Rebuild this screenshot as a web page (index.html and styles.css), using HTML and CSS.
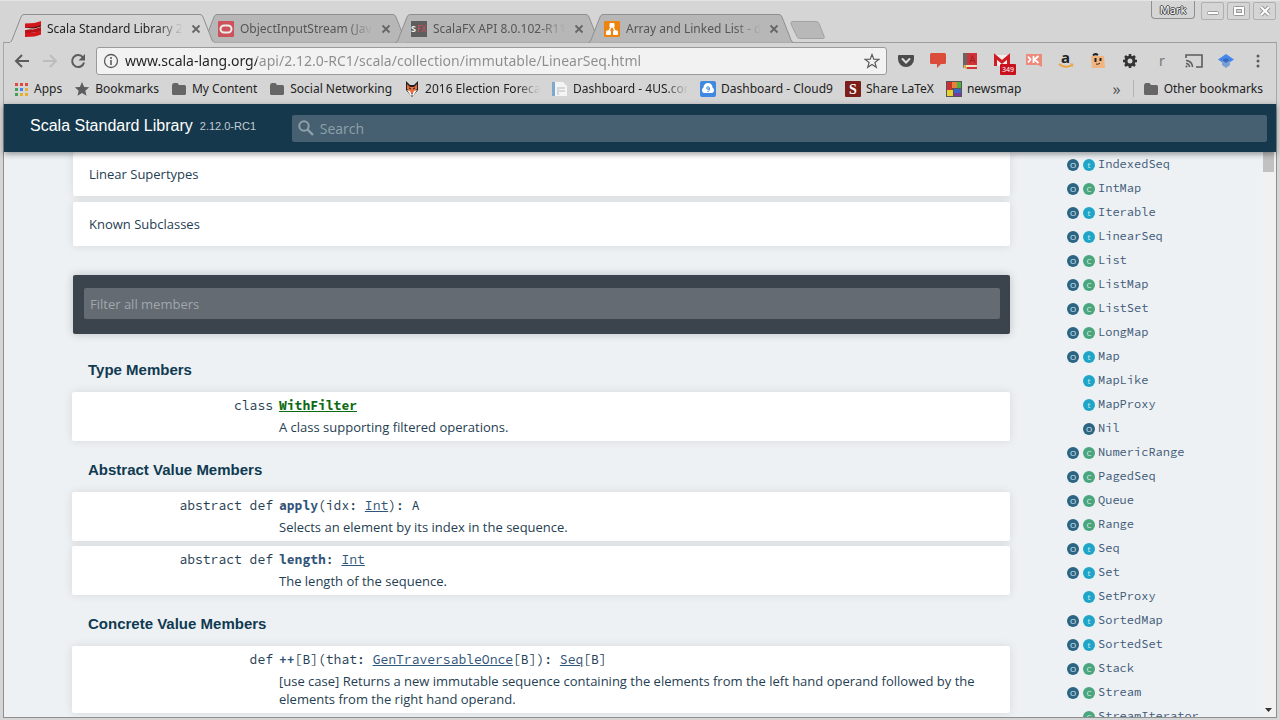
FILE: index.html
```html
<!DOCTYPE html>
<html lang="en">
<head>
    <meta charset="UTF-8">
    <meta name="viewport" content="width=device-width, initial-scale=1.0">
    <title>Scala Standard Library 2.12.0-RC1</title>
    <link rel="stylesheet" href="styles.css">
</head>
<body>

<svg class="defs" aria-hidden="true">
    <symbol id="tab-shape" viewBox="0 0 206 29" preserveAspectRatio="none">
        <path d="M0.500 28.500 Q2 28.500 3 26 L12 3 Q13 0.500 15 0.500 H191 Q193 0.500 194 3 L203 26 Q204 28.500 205.500 28.500"/>
    </symbol>
    <symbol id="close" viewBox="0 0 10 10">
        <path d="M1.500 1.500l7 7M8.500 1.500l-7 7" fill="none" stroke="#666" stroke-width="1.800"/>
    </symbol>
    <symbol id="folder" viewBox="0 0 16 16">
        <path d="M1 4.500Q1 2 3 2h3.500L8 4h5.500Q15 4 15 5.500v7Q15 14 13.500 14h-11Q1 14 1 12.500z" fill="#666"/>
    </symbol>
</svg>

<div class="window">
    <div class="titlebar">
        <div class="tabs">
            <div class="tab active">
                <svg class="shape"><use href="#tab-shape"/></svg>
                <svg class="icon" viewBox="0 0 16 16"><path d="M0 2.500Q11 2.500 16 0v4.500Q11 7 0 7z" fill="#d4151c"/><path d="M0 6.500Q11 6.500 16 4v2L9 8z" fill="#5a1212"/><path d="M0 8Q11 8 16 5.500V9Q11 12 0 12z" fill="#e8e0e0"/><path d="M0 9Q6 8 8 8.500L16 6v4Q11 12 0 12z" fill="#b81318"/><path d="M0 12Q11 12 16 9.500v4Q11 16 0 16z" fill="#d4151c"/></svg>
                <span class="tab-title">Scala Standard Library 2</span>
                <button class="tab-close" aria-label="Close tab"><svg><use href="#close"/></svg></button>
            </div>
            <div class="tab">
                <svg class="shape"><use href="#tab-shape"/></svg>
                <svg class="icon" viewBox="0 0 16 16"><rect width="16" height="16" rx="1" fill="#cb5359"/><rect x="2.500" y="4.500" width="11" height="7" rx="3.500" fill="none" stroke="#eee" stroke-width="2"/></svg>
                <span class="tab-title">ObjectInputStream (Jav</span>
                <button class="tab-close" aria-label="Close tab"><svg><use href="#close"/></svg></button>
            </div>
            <div class="tab">
                <svg class="shape"><use href="#tab-shape"/></svg>
                <svg class="icon" viewBox="0 0 16 16"><rect width="16" height="16" fill="#5e5e5e"/><text x="0" y="11" font-size="9" font-weight="bold" fill="#eee">S</text><text x="6" y="11" font-size="8" fill="#d84a5a">FX</text></svg>
                <span class="tab-title">ScalaFX API 8.0.102-R11</span>
                <button class="tab-close" aria-label="Close tab"><svg><use href="#close"/></svg></button>
            </div>
            <div class="tab">
                <svg class="shape"><use href="#tab-shape"/></svg>
                <svg class="icon" viewBox="0 0 16 16"><rect width="16" height="16" rx="1" fill="#ee8410"/><path d="M8 4L4 12M8 4l4 8" stroke="#fff" stroke-width="1.500"/><rect x="5.500" y="2" width="5" height="4.500" rx="1" fill="#fff"/><rect x="2" y="9.500" width="5" height="4.500" rx="1" fill="#fff"/><rect x="9" y="9.500" width="5" height="4.500" rx="1" fill="#fff"/></svg>
                <span class="tab-title">Array and Linked List - d</span>
                <button class="tab-close" aria-label="Close tab"><svg><use href="#close"/></svg></button>
            </div>
        </div>
        <button class="new-tab" aria-label="New tab">
            <svg viewBox="0 0 36 18"><path d="M2.500 0.500H26Q28 0.500 29 2.500l5 12.500Q35 17.500 33 17.500H10Q8 17.500 7 15.500L1 3Q0.500 0.500 2.500 0.500z" fill="#b8b8b8" stroke="#a2a2a2"/></svg>
        </button>
        <div class="window-controls">
            <button class="profile">Mark</button>
            <button class="control" aria-label="Minimize"><svg viewBox="0 0 12 12"><rect x="0.500" y="6.500" width="11" height="3" rx="1" fill="#fff" stroke="#999"/></svg></button>
            <button class="control" aria-label="Maximize"><svg viewBox="0 0 12 12"><rect x="0.500" y="1.500" width="11" height="9" rx="1" fill="#fff" stroke="#999"/><rect x="3.500" y="4.500" width="5" height="3" fill="#d5d5d5" stroke="#999"/></svg></button>
            <button class="control" aria-label="Close"><svg viewBox="0 0 12 12"><path d="M2 2l8 8M10 2l-8 8" stroke="#999" stroke-width="4"/><path d="M2 2l8 8M10 2l-8 8" stroke="#fff" stroke-width="2"/></svg></button>
        </div>
    </div>

    <div class="toolbar">
        <button class="nav" aria-label="Back"><svg viewBox="0 0 16 16"><path d="M15 8H2M8 2L2 8l6 6" fill="none" stroke="#5c5c5c" stroke-width="2"/></svg></button>
        <button class="nav" aria-label="Forward"><svg viewBox="0 0 16 16"><path d="M1 8h13M8 2l6 6-6 6" fill="none" stroke="#bdbdbd" stroke-width="2"/></svg></button>
        <button class="nav" aria-label="Reload"><svg viewBox="0 0 16 16"><path d="M13 4.500A6 6 0 1 0 14 9.500" fill="none" stroke="#5c5c5c" stroke-width="2"/><path d="M15 1v6.500H8.500z" fill="#5c5c5c"/></svg></button>
        <div class="omnibox">
            <svg class="icon" viewBox="0 0 16 16"><circle cx="8" cy="8" r="6.500" fill="none" stroke="#5c5c5c" stroke-width="1.300"/><path d="M8 7v5M8 4v2" stroke="#5c5c5c" stroke-width="1.600"/></svg>
            <input class="url" type="text" aria-label="Address" value="www.scala-lang.org/api/2.12.0-RC1/scala/collection/immutable/LinearSeq.html">
            <svg class="icon" viewBox="0 0 16 16"><path d="M8 1.500l1.800 4.700 5 .2-3.900 3.100 1.400 4.800L8 11.500l-4.300 2.800 1.400-4.800L1.200 6.400l5-.2z" fill="none" stroke="#5c5c5c" stroke-width="1.200"/></svg>
        </div>
        <div class="extensions">
            <button aria-label="Pocket"><svg viewBox="0 0 16 16"><path d="M1 2h14q1 0 1 1v3a8 8 0 0 1-16 0V3q0-1 1-1z" fill="#4c4c4c"/><path d="M4.500 6L8 9.500 11.500 6" fill="none" stroke="#ddd" stroke-width="2" stroke-linecap="round"/></svg></button>
            <button aria-label="Comments"><svg viewBox="0 0 16 16"><path d="M1.500 0h13Q16 0 16 1.500v8Q16 11 14.500 11H11l-4 4v-4H1.500Q0 11 0 9.500v-8Q0 0 1.500 0z" fill="#db4c3b"/></svg></button>
            <button aria-label="Dictionary"><svg viewBox="0 0 16 16"><path d="M1 0h4v13l-4 2z" fill="#666"/><path d="M5 0h10v12H5z" fill="#d13438"/><path d="M2 12h12v3H2z" fill="#eee3c2"/><path d="M1 13l3 3h11v-2H4V12z" fill="#d9a13a"/><path d="M5 14h10v2H5z" fill="#d13438"/><text x="7" y="10" font-size="10" fill="#9d2226">A</text></svg></button>
            <button class="mail" aria-label="Mail"><svg viewBox="0 0 16 16"><path d="M0 2h16v11H0z" fill="#f3eeee"/><path d="M1.500 13V3.500L8 9l6.500-5.500V13" fill="none" stroke="#d01c24" stroke-width="3"/></svg><span class="badge">349</span></button>
            <button aria-label="Klipper"><svg viewBox="0 0 16 16"><path d="M0 1h16v13l-4-2H0z" fill="#ec8b7c"/><path d="M7.500 3v7M12.500 3L8.500 6.500l4 3.500M2 3.500l2.500 3-2.500 3" fill="none" stroke="#fff" stroke-width="1.800"/></svg></button>
            <button aria-label="Amazon"><svg viewBox="0 0 16 16"><text x="3" y="10" font-size="15" font-weight="bold" fill="#222">a</text><path d="M1 11q6 5 13 1" fill="none" stroke="#eba33c" stroke-width="2"/><path d="M12 11h3l-1 3" fill="none" stroke="#eba33c"/></svg></button>
            <button aria-label="Honey"><svg viewBox="0 0 16 16"><path d="M1 3h13l1 12H2z" fill="#f2b580"/><path d="M3 2.500Q5 0 8 2M5.500 5v4M10.500 5v3" stroke="#222" stroke-width="2" fill="none"/><path d="M6 11q2 1 4-1" stroke="#333" fill="none"/></svg></button>
            <button aria-label="Settings"><svg viewBox="0 0 16 16"><circle cx="8" cy="8" r="4" fill="none" stroke="#333" stroke-width="3"/><path d="M8 1v2.500M8 12.500V15M1 8h2.500M12.500 8H15M3 3l2 2M11 11l2 2M13 3l-2 2M5 11l-2 2" stroke="#333" stroke-width="2.500"/></svg></button>
            <button class="letter">r</button>
            <button aria-label="Cast"><svg class="cast" viewBox="0 0 18 16"><path d="M1 5V2h16v12h-6" fill="none" stroke="#5c5c5c" stroke-width="1.600"/><path d="M1 7.500A6.500 6.500 0 0 1 7.500 14M1 10.500A3.500 3.500 0 0 1 4.500 14" fill="none" stroke="#5c5c5c" stroke-width="1.600"/><circle cx="1.500" cy="13.500" r="1" fill="#5c5c5c"/></svg></button>
            <button aria-label="Scholar"><svg viewBox="0 0 16 16"><path d="M8 1l8 5.500L8 12 0 6.500z" fill="#4387ec"/><path d="M4 7l4-2 4 2v5l-4 3-4-3z" fill="#7a9fd6"/><path d="M4 7l4-2 4 2-4 3z" fill="#3568c4"/></svg></button>
            <button aria-label="Menu"><svg viewBox="0 0 16 16"><circle cx="8" cy="3" r="1.500" fill="#5c5c5c"/><circle cx="8" cy="8" r="1.500" fill="#5c5c5c"/><circle cx="8" cy="13" r="1.500" fill="#5c5c5c"/></svg></button>
        </div>
    </div>

    <nav class="bookmarks">
        <a href="#"><svg class="icon" viewBox="0 0 16 16"><path d="M2 2h3v3H2zM7 2h3v3H7zM12 2h3v3h-3z" fill="#dd4b3e"/><path d="M2 7h3v3H2zM2 12h3v3H2z" fill="#3fa35b"/><path d="M7 7h3v3H7z" fill="#4285f4"/><path d="M12 7h3v3h-3zM7 12h3v3H7zM12 12h3v3h-3z" fill="#e8ae32"/></svg>Apps</a>
        <a href="#"><svg class="icon" viewBox="0 0 16 16"><path d="M8 1l2.100 4.900 5.100.4-3.900 3.400 1.200 5.100L8 12l-4.500 2.800 1.200-5.100L.8 6.300l5.100-.4z" fill="#5c5c5c"/></svg>Bookmarks</a>
        <a href="#"><svg class="icon"><use href="#folder"/></svg>My Content</a>
        <a href="#"><svg class="icon"><use href="#folder"/></svg>Social Networking</a>
        <a href="#"><svg class="icon" viewBox="0 0 16 16"><path d="M2 0l4 4h4l4-4v9l-6 7-6-7z" fill="#222"/><path d="M3 3l3 3h4l3-3v5l-5 5-5-5z" fill="#ec6d3c"/><path d="M3 9l3 1 2 4-1 1zM13 9l-3 1-2 4 1 1z" fill="#fff"/><path d="M5 7l2 1M11 7L9 8" stroke="#222"/></svg><span class="clip">2016 Election Foreca</span></a>
        <a href="#"><svg class="icon" viewBox="0 0 16 16"><path d="M0 1h4v14H0z" fill="#7fa9cc"/><path d="M3 1h8l4 4v10H3z" fill="#f4f4f4"/><path d="M7 7h6M7 10h6M6 6v8" stroke="#c9ced2" stroke-width="1.500"/></svg><span class="clip">Dashboard - 4US.cor</span></a>
        <a href="#"><svg class="icon" viewBox="0 0 16 16"><rect width="16" height="16" rx="2" fill="#3f8ae0"/><path d="M4 12a3 3 0 0 1-.5-5.500 4.500 4.500 0 0 1 9 0A3 3 0 0 1 12 12z" fill="#fff"/><circle cx="8" cy="7" r="1.300" fill="none" stroke="#3f8ae0"/><path d="M9.500 7q0 3-2 4" fill="none" stroke="#3f8ae0"/></svg>Dashboard - Cloud9</a>
        <a href="#"><svg class="icon" viewBox="0 0 16 16"><rect width="16" height="16" rx="1" fill="#7c1f1a"/><text class="serif" x="4" y="13" font-size="14" font-weight="bold" fill="#fff">S</text></svg>Share LaTeX</a>
        <a href="#"><svg class="icon" viewBox="0 0 16 16"><path d="M0 0h16v16H0z" fill="#555"/><path d="M1 1h5v8H1z" fill="#c93030"/><path d="M6 1h5v6H6z" fill="#e8823a"/><path d="M11 1h4v6h-4z" fill="#4cb043"/><path d="M1 9h6v6H1z" fill="#e6cf31"/><path d="M8 8h7v4H8z" fill="#3a65c9"/><path d="M8 12h7v3H8z" fill="#7a3a9c"/></svg>newsmap</a>
        <button class="more" aria-label="More bookmarks">»</button>
        <a class="other" href="#"><svg class="icon"><use href="#folder"/></svg>Other bookmarks</a>
    </nav>

    <div class="page">
        <header class="doc-header">
            <h1>Scala Standard Library</h1>
            <span class="version">2.12.0-RC1</span>
            <label class="search">
                <svg class="icon" viewBox="0 0 16 16"><circle cx="6" cy="6" r="4.700" fill="none" stroke="#8fa0aa" stroke-width="2"/><path d="M9.500 9.500l5.500 5.500" stroke="#8fa0aa" stroke-width="2.400"/></svg>
                <input type="text" placeholder="Search" aria-label="Search">
            </label>
        </header>

        <div class="doc-body">
            <main class="content">
                <section class="fold">Linear Supertypes</section>
                <section class="fold">Known Subclasses</section>

                <div class="filter">
                    <input type="text" placeholder="Filter all members" aria-label="Filter all members">
                </div>

                <h3>Type Members</h3>
                <ol class="members">
                    <li>
                        <span class="kind">class</span>
                        <span class="symbol"><a class="implicit" href="#">WithFilter</a></span>
                        <p>A class supporting filtered operations.</p>
                    </li>
                </ol>

                <h3>Abstract Value Members</h3>
                <ol class="members">
                    <li>
                        <span class="kind">abstract def</span>
                        <span class="symbol"><b>apply</b>(idx: <a href="#">Int</a>): A</span>
                        <p>Selects an element by its index in the sequence.</p>
                    </li>
                    <li>
                        <span class="kind">abstract def</span>
                        <span class="symbol"><b>length</b>: <a href="#">Int</a></span>
                        <p>The length of the sequence.</p>
                    </li>
                </ol>

                <h3>Concrete Value Members</h3>
                <ol class="members">
                    <li>
                        <span class="kind">def</span>
                        <span class="symbol"><b>++</b>[B](that: <a href="#">GenTraversableOnce</a>[B]): <a href="#">Seq</a>[B]</span>
                        <p>[use case] Returns a new immutable sequence containing the elements from the left hand operand followed by the elements from the right hand operand.</p>
                    </li>
                </ol>
            </main>

            <ul class="packages">
                <li><i class="object">O</i><i class="trait">t</i><a href="#">IndexedSeq</a></li>
                <li><i class="object">O</i><i class="class">C</i><a href="#">IntMap</a></li>
                <li><i class="object">O</i><i class="trait">t</i><a href="#">Iterable</a></li>
                <li><i class="object">O</i><i class="trait">t</i><a href="#">LinearSeq</a></li>
                <li><i class="object">O</i><i class="class">C</i><a href="#">List</a></li>
                <li><i class="object">O</i><i class="class">C</i><a href="#">ListMap</a></li>
                <li><i class="object">O</i><i class="class">C</i><a href="#">ListSet</a></li>
                <li><i class="object">O</i><i class="class">C</i><a href="#">LongMap</a></li>
                <li><i class="object">O</i><i class="trait">t</i><a href="#">Map</a></li>
                <li><i></i><i class="trait">t</i><a href="#">MapLike</a></li>
                <li><i></i><i class="trait">t</i><a href="#">MapProxy</a></li>
                <li><i></i><i class="object">O</i><a href="#">Nil</a></li>
                <li><i class="object">O</i><i class="class">C</i><a href="#">NumericRange</a></li>
                <li><i class="object">O</i><i class="class">C</i><a href="#">PagedSeq</a></li>
                <li><i class="object">O</i><i class="class">C</i><a href="#">Queue</a></li>
                <li><i class="object">O</i><i class="class">C</i><a href="#">Range</a></li>
                <li><i class="object">O</i><i class="trait">t</i><a href="#">Seq</a></li>
                <li><i class="object">O</i><i class="trait">t</i><a href="#">Set</a></li>
                <li><i></i><i class="trait">t</i><a href="#">SetProxy</a></li>
                <li><i class="object">O</i><i class="trait">t</i><a href="#">SortedMap</a></li>
                <li><i class="object">O</i><i class="trait">t</i><a href="#">SortedSet</a></li>
                <li><i class="object">O</i><i class="class">C</i><a href="#">Stack</a></li>
                <li><i class="object">O</i><i class="class">C</i><a href="#">Stream</a></li>
                <li><i></i><i class="class">C</i><a href="#">StreamIterator</a></li>
            </ul>

            <div class="scrollbar">
                <div class="thumb"></div>
                <svg viewBox="0 0 11 12"><path d="M2 3h7L5.500 7z" fill="#333"/></svg>
            </div>
        </div>
    </div>
</div>

</body>
</html>
```
FILE: styles.css
```css
* {
    margin: 0;
    padding: 0;
    box-sizing: border-box;
}

body {
    font-family: "Noto Sans", sans-serif;
    font-size: 12px;
    color: #222;
    background-color: #d5d5d5;
}

button {
    border: none;
    background: none;
    font: inherit;
}

input {
    border: none;
    outline: none;
    background: none;
    min-width: 0;
}

a {
    color: inherit;
}

svg {
    display: block;
}

.defs {
    position: absolute;
    width: 0;
    height: 0;
}

.icon {
    width: 16px;
    height: 16px;
    flex: none;
}

.window {
    display: flex;
    flex-direction: column;
    height: 100vh;
    overflow: hidden;
    padding: 0 3px 2px 3px;
    border-top: 1px solid #e4e4e4;
}

/* tab strip */
.titlebar {
    display: flex;
    align-items: flex-end;
    height: 42px;
    padding-left: 6px;
    box-shadow: inset 0 -1px #9c9c9c;
}

.tabs {
    display: flex;
}

.tab {
    position: relative;
    display: flex;
    align-items: center;
    width: 206px;
    height: 29px;
    padding: 0 12px 0 16px;
    margin-right: -13px;
    color: #555;
}

.tab .shape {
    position: absolute;
    top: 0;
    left: 0;
    width: 100%;
    height: 100%;
    fill: #b7b7b7;
    stroke: #8f8f8f;
}

.tab.active {
    z-index: 1;
    color: #222;
}

.tab.active .shape {
    fill: #d5d5d5;
}

.tab.active::after {
    content: "";
    position: absolute;
    left: 1px;
    right: 1px;
    bottom: 0;
    height: 1px;
    background-color: #d5d5d5;
}

.tab .icon,
.tab-title,
.tab-close {
    position: relative;
}

.tab-title {
    flex: 1;
    margin: 0 8px 0 6px;
    white-space: nowrap;
    -webkit-mask-image: linear-gradient(to right, #000 80%, transparent);
    mask-image: linear-gradient(to right, #000 80%, transparent);
}

.tab-close {
    margin-right: 5px;
}

.tab-close svg {
    width: 10px;
    height: 10px;
}

.new-tab {
    margin: 0 0 4px 9px;
}

.new-tab svg {
    width: 36px;
    height: 18px;
}

.window-controls {
    display: flex;
    gap: 3px;
    align-self: flex-start;
    margin: 0 1px 0 auto;
}

.profile {
    height: 18px;
    width: 44px;
    margin-right: 3px;
    border: 1px solid #8f8f8f;
    border-top: none;
    border-radius: 0 0 4px 4px;
    font-size: 11px;
    color: #fff;
    text-shadow: 1px 0 #444, -1px 0 #444, 0 1px #444, 0 -1px #444;
}

.control {
    display: flex;
    align-items: center;
    justify-content: center;
    width: 23px;
    height: 18px;
    margin-top: 1px;
    border: 1px solid #b0b0b0;
    border-radius: 2px;
}

.control svg {
    width: 12px;
    height: 12px;
}

/* address bar */
.toolbar {
    display: flex;
    align-items: center;
    height: 35px;
    padding: 0 2px 0 4px;
    border-left: 1px solid #a8a8a8;
    border-right: 1px solid #a8a8a8;
}

.nav {
    width: 28px;
    display: flex;
    justify-content: center;
}

.nav svg,
.extensions svg {
    width: 16px;
    height: 16px;
}

.omnibox {
    flex: 1;
    display: flex;
    align-items: center;
    gap: 6px;
    height: 28px;
    margin-left: 4px;
    padding: 0 6px;
    border: 1px solid #9a9a9a;
    border-radius: 3px;
    background-color: #f2f2f2;
}

.url {
    flex: 1;
    font-family: "Noto Sans", sans-serif;
    font-size: 14px;
    color: transparent;
    /* host part dark, path part grey */
    background: linear-gradient(to right, #222 132px, #8c8c8c 132px);
    -webkit-background-clip: text;
    background-clip: text;
}

.extensions {
    display: flex;
    margin-left: 3px;
}

.extensions button {
    position: relative;
    display: flex;
    align-items: center;
    justify-content: center;
    width: 32px;
    height: 28px;
}

.extensions .cast {
    width: 18px;
}

.extensions .letter {
    font-size: 14px;
    color: #777;
}

.badge {
    position: absolute;
    left: 14px;
    bottom: 0;
    padding: 0 2px;
    font-size: 7px;
    line-height: 11px;
    color: #fff;
    background-color: #c9101f;
    border-radius: 1px;
}

.bookmarks {
    display: flex;
    align-items: center;
    gap: 12px;
    height: 26px;
    padding: 0 13px 5px 9px;
    border-left: 1px solid #a8a8a8;
    border-right: 1px solid #a8a8a8;
    white-space: nowrap;
}

.bookmarks a {
    display: flex;
    align-items: center;
    gap: 5px;
    text-decoration: none;
}

.clip {
    width: 115px;
    -webkit-mask-image: linear-gradient(to right, #000 80%, transparent);
    mask-image: linear-gradient(to right, #000 80%, transparent);
}

.bookmarks .more {
    margin-left: auto;
    font-size: 16px;
    color: #555;
}

.bookmarks .other {
    padding-left: 9px;
    border-left: 1px solid #b4b4b4;
}

.serif {
    font-family: "Liberation Serif", serif;
}

/* documentation page */
.page {
    flex: 1;
    min-height: 0;
    display: flex;
    flex-direction: column;
    border: 1px solid #8f8f8f;
    border-top: none;
    background-color: #edf1f4;
    color: #1f4053;
    font-family: "Open Sans", sans-serif;
    font-size: 13px;
}

.doc-header {
    position: relative;
    z-index: 1;
    flex: none;
    display: flex;
    align-items: center;
    height: 48px;
    padding: 0 9px 0 26px;
    background-color: #15384c;
    box-shadow: 0 2px 6px rgba(0, 0, 0, 0.4);
    font-family: "Liberation Sans", Arial, sans-serif;
    color: #fff;
}

.doc-header h1 {
    font-size: 16px;
    font-weight: normal;
    padding-bottom: 5px;
}

.version {
    width: 92px;
    margin-left: 7px;
    padding-bottom: 5px;
    font-size: 11px;
    color: #c2ccd2;
}

.search {
    flex: 1;
    display: flex;
    align-items: center;
    gap: 6px;
    height: 27px;
    padding: 0 6px;
    border-radius: 2px;
    background-color: #466071;
}

.search input {
    flex: 1;
    font-family: "Open Sans", sans-serif;
    font-size: 14px;
    color: #fff;
}

.search input::placeholder {
    color: #8fa0aa;
}

.doc-body {
    flex: 1;
    min-height: 0;
    display: flex;
    overflow: hidden;
    padding-right: 2px;
}

.content {
    flex: 1;
    margin-left: 68px;
}

.fold {
    height: 44px;
    margin: 0 0 6px 1px;
    padding: 0 16px;
    line-height: 44px;
    background-color: #fff;
    border-radius: 2px;
    box-shadow: 0 0 10px rgba(0, 0, 0, 0.1);
}

.filter {
    margin: 29px 0 14px 1px;
    padding: 13px 10px 15px 11px;
    background-color: #3b444c;
    border-radius: 2px;
    box-shadow: 0 0 10px rgba(0, 0, 0, 0.2);
}

.filter input {
    display: block;
    width: 100%;
    height: 31px;
    padding: 0 6px;
    border-radius: 2px;
    background-color: #646b72;
    font-family: "Open Sans", sans-serif;
    font-size: 13px;
    color: #fff;
}

.filter input::placeholder {
    color: #a2a7ab;
}

.content h3 {
    padding-left: 16px;
    font-family: "Liberation Sans", Arial, sans-serif;
    font-size: 15px;
    line-height: 44px;
    color: #103a51;
}

.members {
    list-style: none;
    display: flex;
    flex-direction: column;
    gap: 5px;
    margin-bottom: 7px;
}

.members li {
    display: grid;
    grid-template-columns: 201px 1fr;
    column-gap: 6px;
    row-gap: 1px;
    padding: 3px 28px 5px 0;
    background-color: #fff;
    border-radius: 2px;
    box-shadow: 0 0 10px rgba(0, 0, 0, 0.1);
}

.kind,
.symbol {
    font-family: "Source Code Pro", "Liberation Mono", monospace;
    font-size: 13px;
    line-height: 22px;
}

.kind {
    text-align: right;
}

.symbol a,
.symbol b {
    color: #315479;
}

.symbol .implicit {
    color: #0b6a12;
    font-weight: bold;
}

.members p {
    grid-column: 2;
    line-height: 18px;
}

.packages {
    list-style: none;
    width: 253px;
    padding: 1px 0 0 57px;
}

.packages li {
    display: flex;
    align-items: center;
    gap: 4px;
    height: 24px;
}

.packages a {
    font-family: "Source Code Pro", "Liberation Mono", monospace;
    font-size: 12px;
    line-height: 16px;
    padding-bottom: 2px;
    color: #3f5a78;
    text-decoration: none;
    margin-left: -1px;
}

.packages i {
    width: 12px;
    height: 12px;
    border-radius: 50%;
    font-size: 8px;
    font-style: normal;
    line-height: 12px;
    text-align: center;
    color: #dcebf0;
}

.packages .object {
    background-color: #2c6583;
}

.packages .trait {
    background-color: #1fa5c8;
}

.packages .class {
    background-color: #4aa67c;
}

.scrollbar {
    display: flex;
    flex-direction: column;
    justify-content: space-between;
    width: 11px;
    background-color: #f1f1f1;
}

.thumb {
    height: 20px;
    background-color: #c1c1c1;
}
```
